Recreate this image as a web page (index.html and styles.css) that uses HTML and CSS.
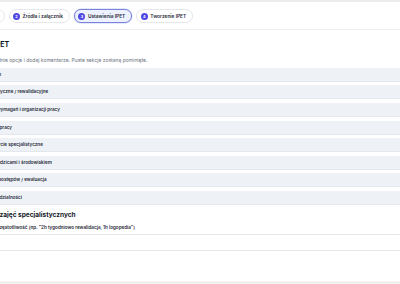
FILE: index.html
```html
<!DOCTYPE html>
<html lang="pl">
<head>
    <meta charset="UTF-8">
    <meta name="viewport" content="width=device-width, initial-scale=1.0">
    <title>Kreator IPET - Ustawienia</title>
    <link rel="stylesheet" href="styles.css">
</head>
<body>
    <div class="page">
        <header class="stepper">
            <div class="steps">
                <div class="step"><span class="num">1</span>Dane ucznia</div>
                <div class="step"><span class="num">2</span>Źródła i załącznik</div>
                <div class="step active"><span class="num">3</span>Ustawienia IPET</div>
                <div class="step"><span class="num">4</span>Tworzenie IPET</div>
            </div>
        </header>

        <main class="content">
            <h1>Ustawienia IPET</h1>
            <p class="hint">Zaznacz odpowiednie opcje i dodaj komentarze. Puste sekcje zostaną pominięte.</p>

            <div class="sections">
                <div class="section-row">Ustalenia ogólne</div>
                <div class="section-row">Zajęcia terapeutyczne / rewalidacyjne</div>
                <div class="section-row">Dostosowanie wymagań i organizacji pracy</div>
                <div class="section-row">Formy i metody pracy</div>
                <div class="section-row">Pozostałe wsparcie specjalistyczne</div>
                <div class="section-row">Współpraca z rodzicami i środowiskiem</div>
                <div class="section-row">Monitorowanie postępów / ewaluacja</div>
                <div class="section-row">Zakres odpowiedzialności</div>
            </div>

            <h2>Liczba godzin zajęć specjalistycznych</h2>
            <label class="field-label" for="hours">Liczba godzin oraz częstotliwość (np. "2h tygodniowo rewalidacja, 1h logopedia")</label>
            <input class="field-input" id="hours" type="text">
        </main>

        <div class="footer-bar"></div>
    </div>
</body>
</html>
```

FILE: styles.css
```css
html, body {
    margin: 0;
    padding: 0;
    background-color: #ffffff;
    font-family: Inter, "Noto Sans", sans-serif;
    overflow: hidden;
}
.page {
    width: 1100px;
    margin-left: -46px;
}
.stepper {
    height: 27px;
    border-top: 2px solid #ececec;
    border-bottom: 1px solid #efefef;
    display: flex;
    align-items: center;
}
.steps {
    display: flex;
    gap: 4px;
    padding-top: 1px;
    padding-left: 1px;
}
.step {
    display: flex;
    align-items: center;
    gap: 2.5px;
    height: 12px;
    padding: 0 6px 0 3.5px;
    border: 1px solid #e5e7eb;
    border-radius: 8px;
    background-color: #ffffff;
    font-size: 4.8px;
    font-weight: 600;
    color: #1f2937;
    white-space: nowrap;
}
.step.active {
    background-color: #eef2ff;
    border-color: #7c83d6;
    box-shadow: 0 0 0 0.5px #c7d2fe;
}
.num {
    width: 7px;
    height: 7px;
    border-radius: 50%;
    background-color: #4f46e5;
    color: #ffffff;
    font-size: 3.8px;
    font-weight: 700;
    display: flex;
    align-items: center;
    justify-content: center;
}
.content {
    padding-top: 11px;
}
.content h1 {
    margin: 0;
    font-size: 7px;
    line-height: 8px;
    font-weight: 700;
    color: #111827;
}
.hint {
    margin: 8px 0 0;
    padding-left: 2px;
    font-size: 5px;
    line-height: 6px;
    color: #6b7280;
}
.sections {
    margin-top: 4.8px;
    display: flex;
    flex-direction: column;
    gap: 3.6px;
}
.section-row {
    height: 14px;
    padding-left: 10px;
    display: flex;
    align-items: center;
    background-color: #eef2f7;
    border-bottom: 0.5px solid #e3e8ef;
    box-sizing: border-box;
    border-radius: 2px;
    font-size: 4.6px;
    font-weight: 600;
    color: #1f2937;
}
.content h2 {
    margin: 6px 0 0;
    font-size: 6.5px;
    line-height: 8px;
    font-weight: 700;
    color: #111827;
}
.field-label {
    display: block;
    margin-top: 6.2px;
    font-size: 4.6px;
    line-height: 6px;
    font-weight: 600;
    color: #1f2937;
}
.field-input {
    display: block;
    width: 100%;
    height: 17px;
    margin-top: 2.7px;
    box-sizing: border-box;
    border: 1px solid #e5e7eb;
    border-radius: 2px;
    background-color: #ffffff;
}
.footer-bar {
    height: 12px;
    margin-top: 30px;
    background-color: #f1f1f1;
}
```
